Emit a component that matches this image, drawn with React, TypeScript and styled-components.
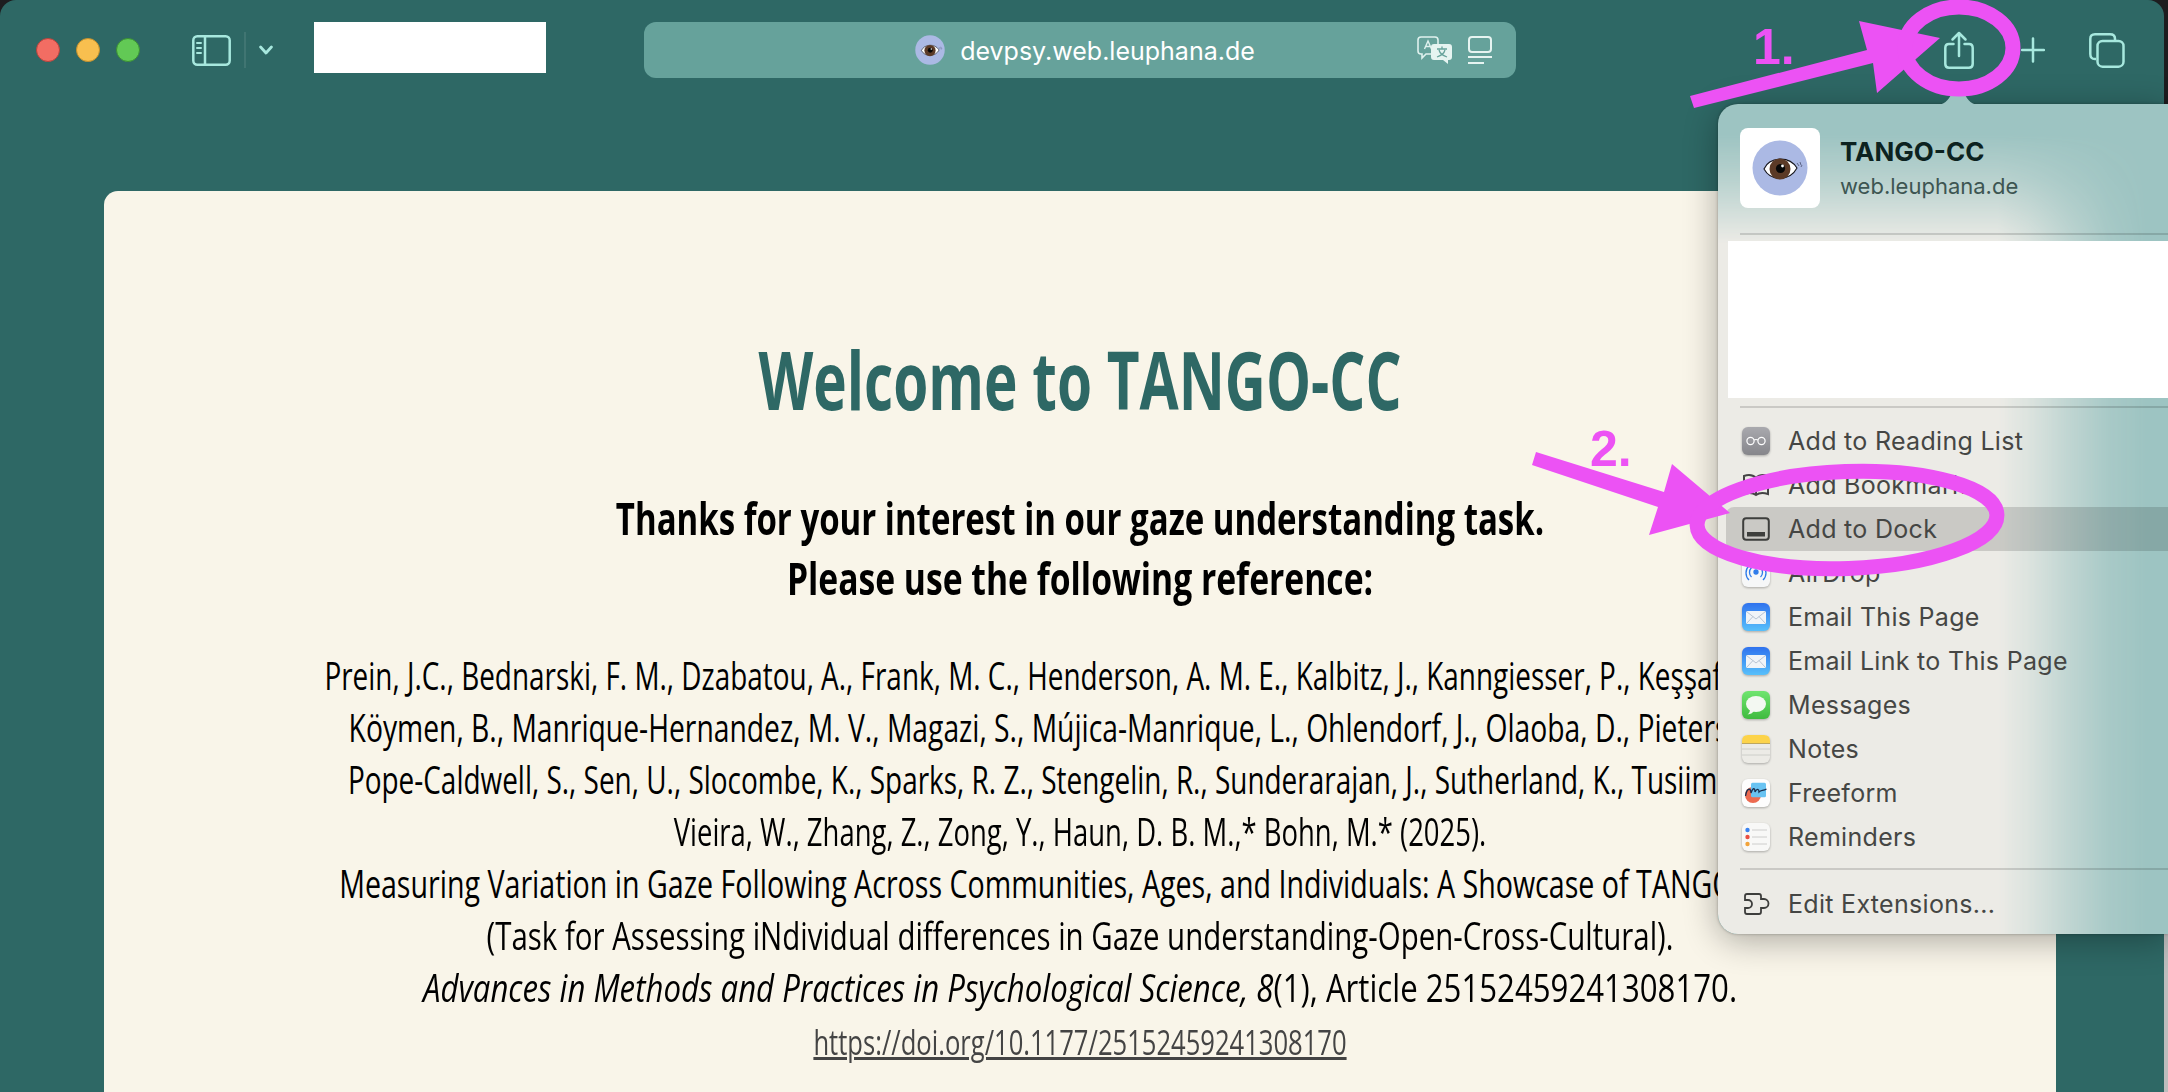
import React from 'react';
import styled, { createGlobalStyle } from 'styled-components';

const GlobalStyle = createGlobalStyle`
  html, body {
    margin: 0;
    padding: 0;
    width: 2168px;
    height: 1092px;
    overflow: hidden;
    background: #1d1d1f;
  }
`;

const MINT = '#a7e8de';
const PINK = '#ec52f4';

// ==================== Icons ====================
const Eye: React.FC<{ size: number }> = ({ size }) => (
  <svg width={size} height={size} viewBox="0 0 56 56">
    <circle cx="28" cy="28" r="27.5" fill="#abb9e4" />
    <path d="M12 29 C17 17 37 15 45 28 C38 41 19 42 12 29Z" fill="#fff" stroke="#15151c" strokeWidth="1.1" />
    <circle cx="28" cy="29" r="10.5" fill="#5b3a27" />
    <circle cx="28.5" cy="28.5" r="4.6" fill="#070707" />
    <circle cx="30.5" cy="26" r="1.4" fill="#fff" />
    <path d="M45 23 l2 3 M48 22 l1 3 M50 25 l-1 2" stroke="#3a3f5c" strokeWidth="0.7" fill="none" />
  </svg>
);

const SidebarIcon = () => (
  <svg width="39" height="31" viewBox="0 0 39 31" fill="none" stroke={MINT} strokeWidth="2.5">
    <rect x="1.3" y="1.3" width="36.4" height="28.4" rx="4" />
    <path d="M13 1.5 V29.5" />
    <path d="M5 8 H9 M5 13 H9 M5 18 H9" strokeWidth="2" strokeLinecap="round" />
  </svg>
);

const ChevronIcon = () => (
  <svg width="14" height="10" viewBox="0 0 14 10" fill="none" stroke={MINT} strokeWidth="2.8" strokeLinecap="round" strokeLinejoin="round">
    <path d="M1.6 2 L7 8 L12.4 2" />
  </svg>
);

const TranslateIcon = () => (
  <svg width="36" height="28" viewBox="0 0 36 28" fill="none">
    <path d="M4 1 H18 Q21 1 21 4 V15 Q21 18 18 18 H9 L5 22 V18 H4 Q1 18 1 15 V4 Q1 1 4 1Z" stroke="#dff1ee" strokeWidth="1.6" />
    <path d="M7.5 13 L11 5 L14.5 13 M9 10.5 H13" stroke="#dff1ee" strokeWidth="1.4" />
    <path d="M17 8 H32 Q35 8 35 11 V21 Q35 24 32 24 H31 V28 L26 24 H17 Q14 24 14 21 V11 Q14 8 17 8Z" fill="#e6f4f1" />
    <path d="M20 13 H30 M25 10.5 V13 M22 14 C23 18 27 20 30 21 M28 14 C27 18 23 20 20 21" stroke="#66a29b" strokeWidth="1.3" />
  </svg>
);

const ReaderIcon = () => (
  <svg width="24" height="28" viewBox="0 0 24 28" fill="none" stroke="#e6f4f1" strokeWidth="2">
    <rect x="1" y="1" width="22" height="15" rx="3" />
    <path d="M0 21 H24" />
    <path d="M0 27 H16" />
  </svg>
);

const ShareIcon = () => (
  <svg width="30" height="38" viewBox="0 0 30 38" fill="none" stroke={MINT} strokeWidth="2.5" strokeLinecap="round" strokeLinejoin="round">
    <path d="M9.5 13 H5 Q1.3 13 1.3 17 V33 Q1.3 36.7 5 36.7 H25 Q28.7 36.7 28.7 33 V17 Q28.7 13 25 13 H20.5" />
    <path d="M15 25 V2 M8.5 8.5 L15 2 L21.5 8.5" />
  </svg>
);

const PlusIcon = () => (
  <svg width="24" height="26" viewBox="0 0 24 26" fill="none" stroke={MINT} strokeWidth="2.5" strokeLinecap="round">
    <path d="M12 1.5 V24.5 M1 13 H23" />
  </svg>
);

const TabsIcon = () => (
  <TabsSvg width="36" height="35" viewBox="0 0 36 35" fill="none" stroke={MINT} strokeWidth="2.5">
    <path d="M7 26 H6 Q1.3 26 1.3 21 V6 Q1.3 1.3 6 1.3 H21 Q26 1.3 26 6 V8" />
    <rect x="8.5" y="8" width="26" height="25.7" rx="5" />
  </TabsSvg>
);

const Tile: React.FC<{ children: React.ReactNode; $flat?: boolean }> = ({ children, $flat }) => (
  <TileSvg $flat={$flat} width="28" height="28" viewBox="0 0 28 28" fill="none">
    {children}
  </TileSvg>
);

const MailTile = () => (
  <Tile>
    <defs>
      <linearGradient id="mailBg" x1="0" y1="0" x2="0" y2="1">
        <stop offset="0" stopColor="#2f72ee" />
        <stop offset="1" stopColor="#58c0fb" />
      </linearGradient>
    </defs>
    <rect width="28" height="28" rx="6" fill="url(#mailBg)" />
    <rect x="4" y="8" width="20" height="13" rx="1.5" fill="#f1f4f8" />
    <path d="M4.5 8.5 L14 16 L23.5 8.5 M4.5 20.5 L11 13.5 M23.5 20.5 L17 13.5" stroke="#a9b8c9" strokeWidth="0.8" />
  </Tile>
);

const ROW_ICONS: Record<string, React.ReactNode> = {
  reading: (
    <Tile>
      <defs>
        <linearGradient id="readBg" x1="0" y1="0" x2="0" y2="1">
          <stop offset="0" stopColor="#a9a9ae" />
          <stop offset="1" stopColor="#86868b" />
        </linearGradient>
      </defs>
      <rect width="28" height="28" rx="6" fill="url(#readBg)" />
      <circle cx="8.5" cy="14" r="3.6" stroke="#fff" strokeWidth="1.2" />
      <circle cx="19.5" cy="14" r="3.6" stroke="#fff" strokeWidth="1.2" />
      <path d="M12 13 Q14 12 16 13" stroke="#fff" strokeWidth="1.2" />
    </Tile>
  ),
  bookmark: (
    <Tile $flat>
      <path d="M14 7 C10 3 5 4 2 5 V23 C5 22 10 21 14 24 C18 21 23 22 26 23 V5 C23 4 18 3 14 7Z M14 7 V24" stroke="#444" strokeWidth="2" />
    </Tile>
  ),
  dock: (
    <Tile $flat>
      <rect x="1.2" y="3.2" width="25.6" height="21.6" rx="3" stroke="#3d3e3c" strokeWidth="2" />
      <rect x="5" y="17" width="18" height="4.5" fill="#3d3e3c" />
    </Tile>
  ),
  airdrop: (
    <Tile>
      <rect width="28" height="28" rx="6" fill="#f6f7f8" />
      <g stroke="#2e7bea" strokeWidth="1.3">
        <circle cx="14" cy="13" r="2" fill="#2e7bea" />
        <path d="M9.5 18 A6.5 6.5 0 1 1 18.5 18" />
        <path d="M7 21 A10 10 0 1 1 21 21" />
      </g>
    </Tile>
  ),
  mail: <MailTile />,
  messages: (
    <Tile>
      <defs>
        <linearGradient id="msgBg" x1="0" y1="0" x2="0" y2="1">
          <stop offset="0" stopColor="#6fe56f" />
          <stop offset="1" stopColor="#3fbb3f" />
        </linearGradient>
      </defs>
      <rect width="28" height="28" rx="6" fill="url(#msgBg)" />
      <ellipse cx="14" cy="13" rx="10" ry="8" fill="#f3f8f2" />
      <path d="M8 18 Q8 22 5.5 23.5 Q10 23 12 20Z" fill="#f3f8f2" />
    </Tile>
  ),
  notes: (
    <Tile>
      <rect width="28" height="28" rx="6" fill="#ecebe6" />
      <path d="M0 8 V6 Q0 0 6 0 H22 Q28 0 28 6 V8Z" fill="#fcd34a" />
      <path d="M0 8.5 H28" stroke="#b3953a" strokeWidth="0.8" />
      <path d="M0 14 H28 M0 20 H28" stroke="#c6c6c2" strokeWidth="0.8" />
    </Tile>
  ),
  freeform: (
    <Tile>
      <rect width="28" height="28" rx="6" fill="#fdfdfd" />
      <circle cx="11" cy="16" r="8" fill="#ec6a50" />
      <rect x="9" y="3.7" width="15" height="14.6" rx="1.5" fill="#69c3f2" />
      <path d="M3.5 17 C5 8 9 9 9 14 C11 8 13 9 13 13 C15 9 17 10 17 13 C19 11 21 12 24.5 10" stroke="#1b2f4e" strokeWidth="1.3" />
    </Tile>
  ),
  reminders: (
    <Tile>
      <rect width="28" height="28" rx="6" fill="#f8f8f7" />
      <circle cx="5.5" cy="7" r="2.2" fill="#3a82f0" />
      <circle cx="5.5" cy="14" r="2.2" fill="#ea4f43" />
      <circle cx="5.5" cy="21" r="2.2" fill="#f2a33b" />
      <path d="M10 7 H25 M10 14 H25 M10 21 H25" stroke="#c8c8c6" strokeWidth="0.9" />
    </Tile>
  ),
  extensions: (
    <Tile $flat>
      <path
        d="M3 6 Q3 4 5 4 H17 Q19 4 19 6 V9 H22 A4 4 0 0 1 22 18 H19 V22 Q19 24 17 24 H5 Q3 24 3 22 V18 H6 A4 4 0 0 0 6 10 H3Z"
        stroke="#3d3e3c"
        strokeWidth="1.8"
      />
    </Tile>
  ),
};

// ==================== Data ====================
// no condensed face is installed, so each line is narrowed to the width it has in the page
const REFERENCE_LINES = [
  { text: 'Prein, J.C., Bednarski, F. M., Dzabatou, A., Frank, M. C., Henderson, A. M. E., Kalbitz, J., Kanngiesser, P., Keşşafoğlu, D.,', squeeze: 0.725, nudge: -48 },
  { text: 'Köymen, B., Manrique-Hernandez, M. V., Magazi, S., Mújica-Manrique, L., Ohlendorf, J., Olaoba, D., Pieters, M.,', squeeze: 0.734, nudge: -15 },
  { text: 'Pope-Caldwell, S., Sen, U., Slocombe, K., Sparks, R. Z., Stengelin, R., Sunderarajan, J., Sutherland, K., Tusiime, E.,', squeeze: 0.7255, nudge: -24 },
  { text: 'Vieira, W., Zhang, Z., Zong, Y., Haun, D. B. M.,* Bohn, M.* (2025).', squeeze: 0.713, nudge: 0 },
  { text: 'Measuring Variation in Gaze Following Across Communities, Ages, and Individuals: A Showcase of TANGO–CC', squeeze: 0.743, nudge: -18 },
  { text: '(Task for Assessing iNdividual differences in Gaze understanding-Open-Cross-Cultural).', squeeze: 0.765, nudge: 0 },
];

const MENU_TOP = [
  { icon: 'reading', label: 'Add to Reading List' },
  { icon: 'bookmark', label: 'Add Bookmark' },
  { icon: 'dock', label: 'Add to Dock', active: true },
  { icon: 'airdrop', label: 'AirDrop' },
  { icon: 'mail', label: 'Email This Page' },
  { icon: 'mail', label: 'Email Link to This Page' },
  { icon: 'messages', label: 'Messages' },
  { icon: 'notes', label: 'Notes' },
  { icon: 'freeform', label: 'Freeform' },
  { icon: 'reminders', label: 'Reminders' },
];

const App: React.FC = () => (
  <>
    <GlobalStyle />
    <Stage>
      <BrowserWindow>
        <Toolbar>
          <TrafficLights>
            <Light $color="#f26d63" $edge="#b8433c" />
            <Light $color="#f8bf4f" $edge="#c38f2c" />
            <Light $color="#62c955" $edge="#3b9033" />
          </TrafficLights>
          <SidebarButton><SidebarIcon /></SidebarButton>
          <ToolbarDivider />
          <ChevronButton><ChevronIcon /></ChevronButton>
          <RedactedTab />
          <UrlBar>
            <UrlSite>
              <Eye size={30} />
              <UrlText>devpsy.web.leuphana.de</UrlText>
            </UrlSite>
            <UrlActions>
              <TranslateIcon />
              <ReaderIcon />
            </UrlActions>
          </UrlBar>
          <ToolbarActions>
            <ShareIcon />
            <PlusIcon />
            <TabsIcon />
          </ToolbarActions>
        </Toolbar>
        <Card>
          <Title>Welcome to TANGO-CC</Title>
          <Lead>
            <FitLine $squeeze={0.733}>Thanks for your interest in our gaze understanding task.</FitLine>
            <FitLine $squeeze={0.748}>Please use the following reference:</FitLine>
          </Lead>
          <Citation>
            {REFERENCE_LINES.map(line => (
              <FitLine key={line.text} $squeeze={line.squeeze} $nudge={line.nudge}>{line.text}</FitLine>
            ))}
            <FitLine $squeeze={0.81}>
              <em>Advances in Methods and Practices in Psychological Science, 8</em>(1), Article 25152459241308170.
            </FitLine>
          </Citation>
          <DoiLink>https://doi.org/10.1177/25152459241308170</DoiLink>
        </Card>
      </BrowserWindow>

      <Popover>
        <PopoverNub width="44" height="24" viewBox="0 0 44 24">
          <path d="M0 24 C8 24 12 20 16 12 L20 3 Q22 0 24 3 L28 12 C32 20 36 24 44 24Z" fill="#9dc4c2" />
        </PopoverNub>
        <PopoverBody>
          <SiteHeader>
            <SiteTile><Eye size={56} /></SiteTile>
            <SiteText>
              <SiteName>TANGO-CC</SiteName>
              <SiteHost>web.leuphana.de</SiteHost>
            </SiteText>
          </SiteHeader>
          <MenuRule />
          <RedactedBlock />
          <MenuRule />
          <MenuList>
            {MENU_TOP.map(item => (
              <MenuRow key={item.label} $active={item.active}>
                {ROW_ICONS[item.icon]}
                <MenuLabel>{item.label}</MenuLabel>
              </MenuRow>
            ))}
          </MenuList>
          <MenuRule />
          <MenuRow $footer>
            {ROW_ICONS.extensions}
            <MenuLabel>Edit Extensions...</MenuLabel>
          </MenuRow>
        </PopoverBody>
      </Popover>

      <Annotations width="2168" height="1092" viewBox="0 0 2168 1092" fill={PINK}>
        <path d="M1690 96 L1694 108 L1873 63 L1877 93 L1940 38 L1859 21 L1867 50Z" />
        <ellipse cx="1959" cy="48" rx="54" ry="41" fill="none" stroke={PINK} strokeWidth="15" />
        <path d="M1532 465 L1536 452 L1664 492 L1672 464 L1730 513 L1649 535 L1658 507Z" />
        <ellipse cx="1847" cy="520" rx="150" ry="48.5" fill="none" stroke={PINK} strokeWidth="15" transform="rotate(-2 1847 520)" />
      </Annotations>
      <StepLabel $left={1753} $top={19}>1.</StepLabel>
      <StepLabel $left={1590} $top={421}>2.</StepLabel>
    </Stage>
  </>
);

export default App;

// ==================== Styled Components ====================
const Stage = styled.div`
  position: relative;
  width: 2168px;
  height: 1092px;
  overflow: hidden;
  background: linear-gradient(to bottom, #1d1d1f 0, #1d1d1f 120px, #bdbdbd 900px);
`;

const BrowserWindow = styled.div`
  width: 2164px;
  height: 1092px;
  border-radius: 16px 16px 0 0;
  background: #2e6865;
  overflow: hidden;
`;

const Toolbar = styled.div`
  display: flex;
  align-items: center;
  height: 100px;
  padding-left: 36px;
`;

const TrafficLights = styled.div`
  display: flex;
  gap: 16px;
`;

const Light = styled.span<{ $color: string; $edge: string }>`
  width: 24px;
  height: 24px;
  border-radius: 50%;
  box-sizing: border-box;
  background: ${p => p.$color};
  border: 1px solid ${p => p.$edge};
`;

const SidebarButton = styled.div`
  display: flex;
  margin-left: 52px;
`;

const ToolbarDivider = styled.div`
  width: 2px;
  height: 36px;
  margin-left: 13px;
  background: rgba(255, 255, 255, 0.09);
`;

const ChevronButton = styled.div`
  display: flex;
  margin-left: 13px;
`;

const RedactedTab = styled.div`
  width: 232px;
  height: 51px;
  margin: -5px 0 0 41px;
  background: #fff;
`;

const UrlBar = styled.div`
  display: grid;
  grid-template-columns: 1fr auto 1fr;
  align-items: center;
  box-sizing: border-box;
  width: 872px;
  height: 56px;
  margin-left: 98px;
  padding: 0 24px 0 34px;
  border-radius: 12px;
  background: #66a29b;
`;

const UrlSite = styled.div`
  grid-column: 2;
  display: flex;
  align-items: center;
  gap: 15px;
`;

const UrlText = styled.span`
  font: 400 25px/30px Inter, 'Liberation Sans', sans-serif;
  color: #fff;
  margin-top: 2px;
`;

const UrlActions = styled.div`
  grid-column: 3;
  justify-self: end;
  display: flex;
  align-items: center;
  gap: 15px;
`;

const ToolbarActions = styled.div`
  display: flex;
  align-items: center;
  margin-left: 428px;
  gap: 47px;
`;

const TabsSvg = styled.svg`
  margin-left: -3px;
`;

const Card = styled.main`
  box-sizing: border-box;
  height: 992px;
  margin: 91px 108px 0 104px;
  border-radius: 14px 14px 0 0;
  background: #f9f5e9;
  color: #000;
  text-align: center;
  font-family: 'Open Sans', 'Liberation Sans', sans-serif;
  padding-top: 146px;
  white-space: nowrap;
`;

const Title = styled.h1`
  margin: 0;
  font-size: 80px;
  line-height: 84px;
  font-weight: 700;
  color: #2e6865;
  transform: scaleX(0.709);
`;

const Lead = styled.div`
  margin-top: 67px;
  font-size: 45px;
  line-height: 60px;
  font-weight: 700;
`;

const Citation = styled.div`
  margin-top: 41px;
  font-size: 38.5px;
  line-height: 52px;
`;

const FitLine = styled.div<{ $squeeze: number; $nudge?: number }>`
  transform: translateX(${p => p.$nudge ?? 0}px) scaleX(${p => p.$squeeze});
`;

const DoiLink = styled.a`
  display: block;
  margin-top: 2px;
  font-size: 35px;
  line-height: 54px;
  color: #444;
  text-decoration: underline;
  transform: scaleX(0.731);
`;

const Popover = styled.aside`
  position: absolute;
  left: 1718px;
  top: 104px;
  width: 450px;
  height: 830px;
  border-radius: 20px 0 0 20px;
  background: #9dc4c2;
  box-shadow: 0 6px 34px rgba(0, 0, 0, 0.32), 0 0 3px rgba(0, 0, 0, 0.3);

  &::before {
    content: '';
    position: absolute;
    inset: 0;
    border-radius: inherit;
    background: #ecebe6;
    mask-image:
      linear-gradient(to right, #000 280px, rgba(0, 0, 0, 0.8) 310px, rgba(0, 0, 0, 0.45) 350px, rgba(0, 0, 0, 0.15) 390px, transparent 430px),
      linear-gradient(to bottom, transparent 30px, rgba(0, 0, 0, 0.35) 75px, #000 140px);
    mask-composite: intersect;
  }
`;

const PopoverNub = styled.svg`
  position: absolute;
  left: 218px;
  top: -23px;
`;

const PopoverBody = styled.div`
  position: relative;
  display: flex;
  flex-direction: column;
  padding-top: 24px;
`;

const SiteHeader = styled.div`
  display: flex;
  align-items: center;
  gap: 20px;
  height: 80px;
  margin: 0 0 25px 22px;
`;

const SiteTile = styled.div`
  display: flex;
  align-items: center;
  justify-content: center;
  width: 80px;
  height: 80px;
  border-radius: 8px;
  background: #fff;
`;

const SiteText = styled.div`
  display: flex;
  flex-direction: column;
  gap: 4px;
`;

const SiteName = styled.div`
  font: 700 26px/32px Inter, 'Liberation Sans', sans-serif;
  color: #0c2220;
`;

const SiteHost = styled.div`
  font: 400 22px/28px Inter, 'Liberation Sans', sans-serif;
  color: #3d5552;
`;

const MenuRule = styled.div`
  height: 2px;
  margin-left: 22px;
  background: rgba(0, 0, 0, 0.14);
`;

const RedactedBlock = styled.div`
  height: 157px;
  margin: 6px 0 8px 10px;
  background: #fff;
`;

const MenuList = styled.div`
  padding: 11px 0 9px;
`;

const MenuRow = styled.div<{ $active?: boolean; $footer?: boolean }>`
  display: flex;
  align-items: center;
  gap: 18px;
  height: 44px;
  margin-left: 8px;
  padding-left: 16px;
  margin-top: ${p => (p.$footer ? '12px' : '0')};
  border-radius: 8px 0 0 8px;
  background: ${p => (p.$active ? 'rgba(0, 0, 0, 0.14)' : 'transparent')};
`;

const TileSvg = styled.svg<{ $flat?: boolean }>`
  flex: none;
  filter: ${p => (p.$flat ? 'none' : 'drop-shadow(0 1px 1px rgba(0, 0, 0, 0.28))')};
`;

const MenuLabel = styled.span`
  font: 400 25px/44px Inter, 'Liberation Sans', sans-serif;
  letter-spacing: 0.3px;
  color: #454644;
`;

const Annotations = styled.svg`
  position: absolute;
  left: 0;
  top: 0;
  pointer-events: none;
`;

const StepLabel = styled.span<{ $left: number; $top: number }>`
  position: absolute;
  left: ${p => p.$left}px;
  top: ${p => p.$top}px;
  font: 700 50px/56px 'Liberation Sans', sans-serif;
  color: ${PINK};
`;
